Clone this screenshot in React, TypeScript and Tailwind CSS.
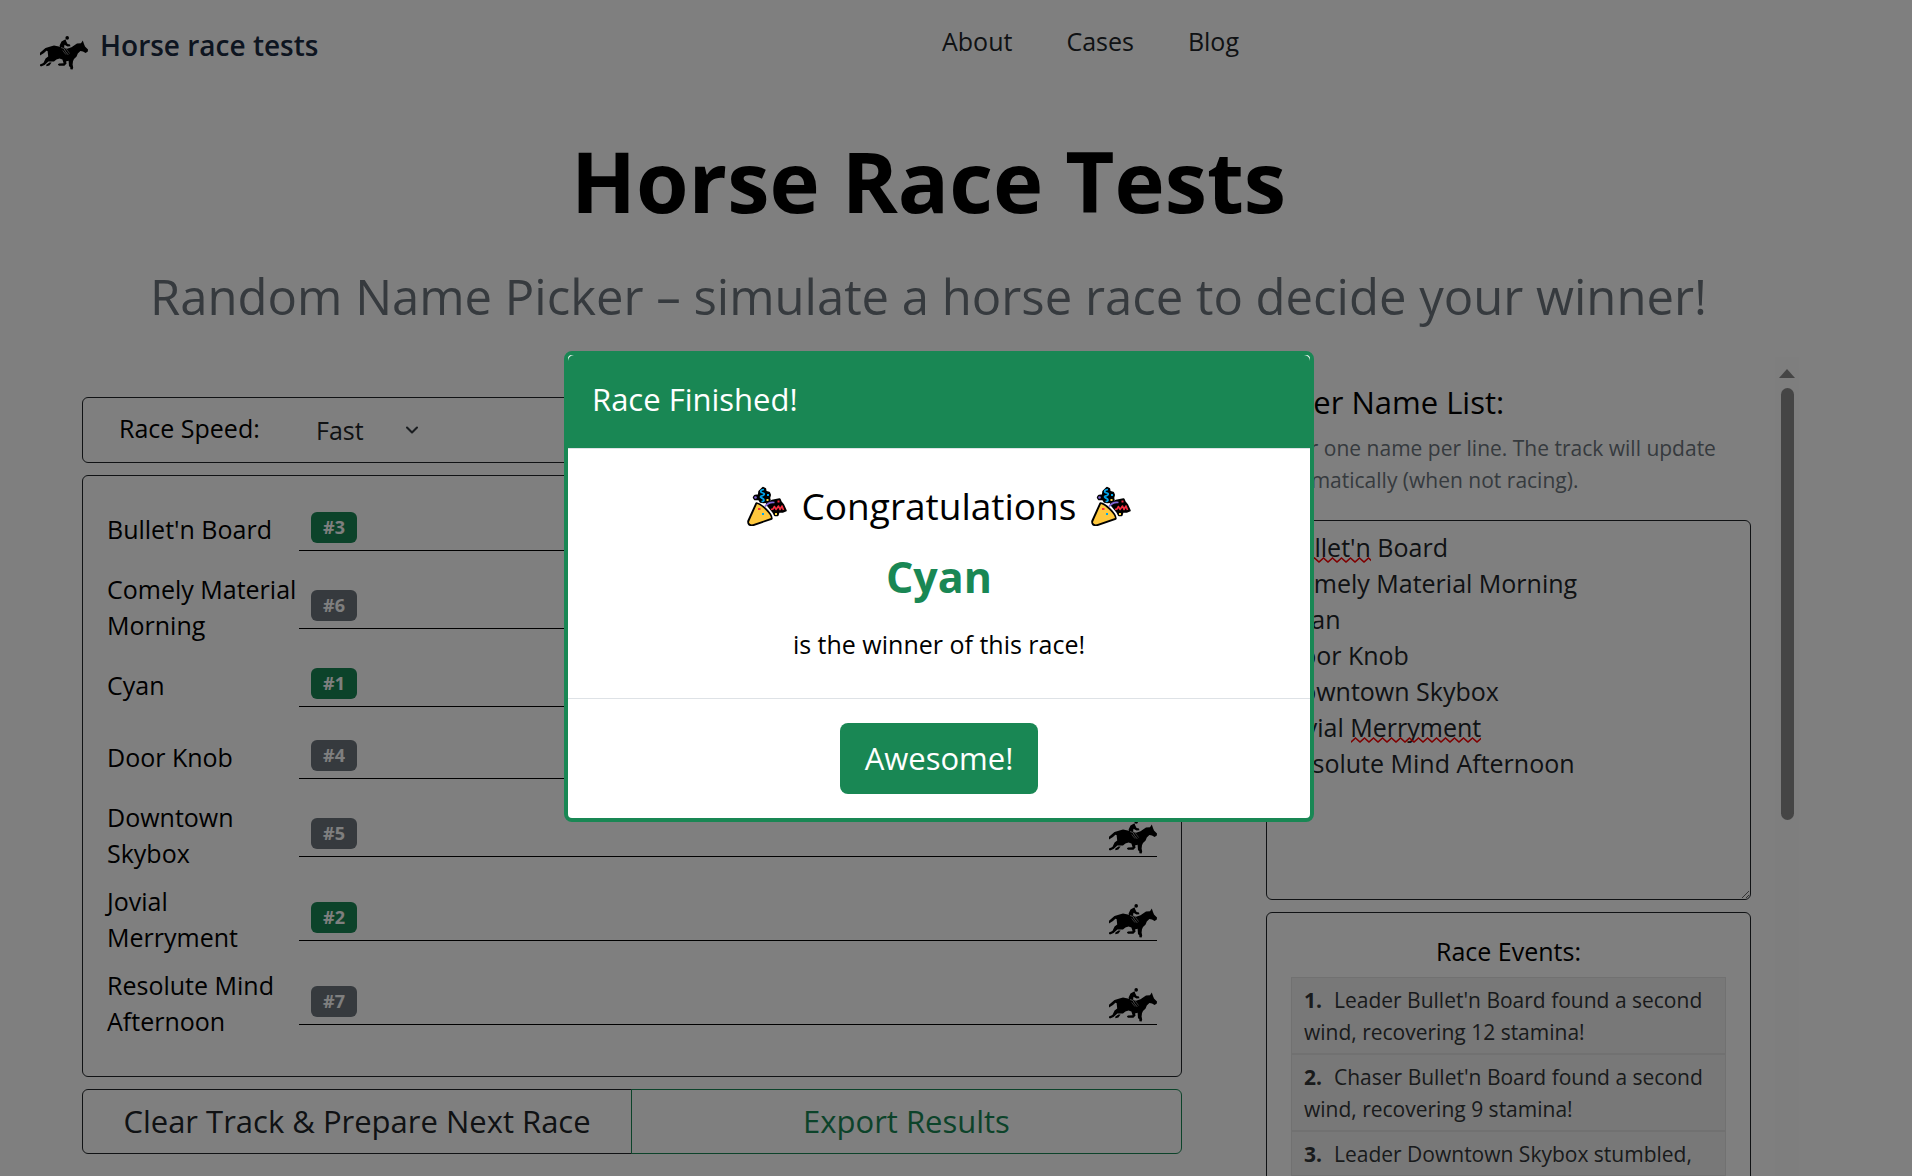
import { useState } from "react";
import { ChevronDown } from "lucide-react";
import clsx from "clsx";

const nav = ["About", "Cases", "Blog"];

const racers = [
  { name: "Bullet'n Board", place: 3 },
  { name: "Comely Material Morning", place: 6 },
  { name: "Cyan", place: 1 },
  { name: "Door Knob", place: 4 },
  { name: "Downtown Skybox", place: 5 },
  { name: "Jovial Merryment", place: 2 },
  { name: "Resolute Mind Afternoon", place: 7 },
];

const events = [
  "Leader Bullet'n Board found a second wind, recovering 12 stamina!",
  "Chaser Bullet'n Board found a second wind, recovering 9 stamina!",
  "Leader Downtown Skybox stumbled,",
];

function Horse() {
  return (
    <svg viewBox="0 0 48 34" className="h-[34px] w-12 shrink-0" aria-hidden="true">
      <circle cx="27.2" cy="1.9" r="1.8" />
      <path d="M25.5 3.2 L21.5 5.5 L19.6 9.5 L20.5 12.5 L24 12 L24.5 8.8 L27.5 10.6 L30.4 10.2 L30 8.6 L27.6 8 L26.4 5.8Z" />
      <path d="M0 19.5 L0 16.8 L5.5 12 L10.5 10.6 L14 9.6 L20 10.8 L27 12.8 L31.5 11.2 L37 7.6 L41 7.2 L42.8 4.4 L43.8 7.6 L45 10.5 L48 13.6 L47.8 15.4 L45.6 17 L43 15.6 L40.4 15 L37.8 17.4 L36.6 20.6 L34 23 L33 25.2 L32.6 28.4 L33.2 31.6 L32.6 33.6 L30.4 33.2 L30.2 31 L29 30.2 L28.6 24.8 L26 25.4 L26.6 27.6 L24.4 29.8 L19 29.8 L17.8 28.6 L19 27.6 L23.6 27.2 L22.4 23.6 L19.6 22.4 L16.4 23.6 L14 25.6 L10.8 25.4 L8.4 25.6 L4.6 29 L1 30.6 L0 29.8 L0 28.6 L3.4 27 L5.6 22.6 L8.2 20.4 L7.6 15 L6.4 14.8 L4 17Z" />
      <path d="M9.4 26.4 L11.6 26.6 L9.4 29.6 L6.4 30.2 L6.2 28.8Z" />
      <path d="M21 11.5 L24 12.5 L25.4 15.4 L28.2 18.8" fill="none" stroke="#b4b4b4" strokeWidth="0.8" />
      <path d="M24.2 11.2 L26.4 13.2 L29.6 17.6 M22.6 14.4 L26 18.6" fill="none" stroke="#9a9a9a" strokeWidth="0.7" />
    </svg>
  );
}

function PartyPopper() {
  return (
    <svg viewBox="0 0 40 40" className="size-10 shrink-0" role="img" aria-label="Party popper">
      <g fill="#000" stroke="#000" strokeWidth="2.4" strokeLinejoin="round">
        <path d="M9.5 17.5 C14 18 24 27 24.5 32.500 L6 39 Q0.800 39.500 1.500 35Z" />
        <path d="M16 2 L18 3 L18.500 6 L22 7 L22.800 9 L22 12 L22.500 14 L21 15.500 L16.500 16 L13.500 15.500 L12 13 L8 13 L7 11.500 L8 10 L12 9.500 L12.500 5.500Z" />
        <path d="M20 18 L25 15 L30 14 L32.500 13.500 L33.500 16 L36 19 L38.500 24.500 L36 25.500 L31.500 25.500 L30.500 29 L28 29 L26.500 26Z" />
      </g>
      <path d="M10 18 C14 19 23 27 24 32 L6 38.300 Q1.500 39 2.200 35.500Z" fill="#FFC83D" />
      <path d="M17 3.500 C12.500 4 13 6.500 16 7 C19 8 16 9.800 14 10.200 C12 12 17 12 17 14 Q17 15.500 14.500 15.500" fill="none" stroke="#00A6ED" strokeWidth="1.700" />
      <path d="M18 20.500 Q22 15.500 27.500 16.500" fill="none" stroke="#8467D7" strokeWidth="1.700" />
      <path d="M24 23.500 L26 23 L27.500 20.500 L29 23.500 L31.500 20 L33 23.500 L35 20 L36.500 24" fill="none" stroke="#F92F40" strokeWidth="1.600" strokeLinejoin="round" />
      <path d="M20 8h2v2h-2zM15 27h2v2h-2z" fill="#00A6ED" />
      <path d="M11 22h2.500v2h-2.500zM30.500 14.500h2v2h-2z" fill="#F92F40" />
      <path d="M19.500 13h2v2h-2zM28 27h2v2h-2z" fill="#FCD53F" />
      <circle cx="8.500" cy="11.500" r="1.300" fill="#8467D7" />
    </svg>
  );
}

/* red zigzag the spell checker puts under unknown words */
function Squiggle({ id, className }: { id: string; className: string }) {
  return (
    <svg className={clsx("pointer-events-none absolute h-[6px]", className)} aria-hidden="true">
      <pattern id={id} width="9" height="6" patternUnits="userSpaceOnUse">
        <path d="M-1 5.500 L0 5 L4.500 1 L9 5 L10 5.500" fill="none" stroke="#ff0000" strokeWidth="1.500" />
      </pattern>
      <rect width="100%" height="6" fill={`url(#${id})`} />
    </svg>
  );
}

function Header() {
  return (
    <header className="grid h-24 grid-cols-2 items-start pr-7">
      <a href="#" className="flex items-center gap-3 pt-6 pl-10 text-[28px] leading-[38px] font-semibold text-[#1b2a41]">
        <span className="pt-3">
          <Horse />
        </span>
        <span className="pb-1">Horse race tests</span>
      </a>
      <nav className="flex gap-[54px] pt-[22px] text-[25px] leading-[38px] text-[#212529]">
        {nav.map((item) => (
          <a key={item} href="#">
            {item}
          </a>
        ))}
      </nav>
    </header>
  );
}

function Track() {
  return (
    <div className="rounded-md border border-[#212529] px-6 pt-[17px] pb-[31px]">
      {racers.map((racer) => (
        <div key={racer.name} className="flex min-h-[72px] items-center py-[6px]">
          <div className="w-48 shrink-0 text-[25px] leading-9">{racer.name}</div>
          <div className="flex h-[43px] flex-1 items-start justify-between border-b border-black pl-3">
            <span
              className={clsx(
                "mt-1 flex h-[31px] w-[46px] items-center justify-center rounded-md text-[18px] font-bold text-white",
                racer.place <= 3 ? "bg-[#198754]" : "bg-[#6c757d]"
              )}
            >
              #{racer.place}
            </span>
            <span className="pt-[6px]">
              <Horse />
            </span>
          </div>
        </div>
      ))}
    </div>
  );
}

function NamePanel() {
  const [names, setNames] = useState(racers.map((r) => r.name).join("\n"));

  return (
    <div>
      <label htmlFor="names" className="block pt-[22px] text-[31px] leading-[46px]">
        Enter Name List:
      </label>
      <p className="pt-[7px] text-[21px] leading-8 text-[#6c757d]">
        Enter one name per line. The track will update automatically (when not racing).
      </p>
      <div className="relative mt-6">
        <textarea
          id="names"
          spellCheck={false}
          value={names}
          onChange={(e) => setNames(e.target.value)}
          className="block h-[380px] w-full resize-y rounded-md border border-[#212529] px-4 py-2 text-[25px] leading-9 text-[#212529]"
        />
        <Squiggle id="wave-bullet" className="top-[37px] left-[17px] w-[88px]" />
        <Squiggle id="wave-merryment" className="top-[217px] left-[85px] w-[130px]" />
      </div>
      <div className="mt-3 rounded-md border border-[#212529] px-6 pt-5 pb-6">
        <h3 className="pb-2 text-center text-[25px] leading-9">Race Events:</h3>
        <ol className="border border-[#e2e2e2] bg-[#f1f1f1]">
          {events.map((text, i) => (
            <li key={text} className="border-b-2 border-[#e2e2e2] px-3 pt-[6px] pb-[5px] text-[21px] leading-8 text-[#333638]">
              <strong className="mr-3">{i + 1}.</strong>
              {text}
            </li>
          ))}
        </ol>
      </div>
    </div>
  );
}

function WinnerDialog({ onClose }: { onClose: () => void }) {
  return (
    <div className="fixed inset-0 flex items-center justify-center bg-black/50 pr-[34px]">
      <div
        role="dialog"
        aria-modal="true"
        aria-labelledby="winner-title"
        className="mb-1 w-full max-w-[750px] rounded-lg border-4 border-[#198754] bg-white"
      >
        <div className="rounded-t-md border-b border-[#dee2e6] bg-[#198754] px-6 pt-[22px] pb-[26px]">
          <h2 id="winner-title" className="text-[31px] leading-[45px] font-medium text-white">
            Race Finished!
          </h2>
        </div>
        <div className="px-6 pt-[30px] pb-[34px] text-center">
          <p className="flex items-center justify-center gap-[15px] text-[37px] leading-[54px]">
            <PartyPopper />
            Congratulations
            <PartyPopper />
          </p>
          <p className="pt-3 text-[43px] leading-[64px] font-bold text-[#198754]">Cyan</p>
          <p className="pt-[15px] text-[25px] leading-10">is the winner of this race!</p>
        </div>
        <div className="flex justify-center border-t border-[#dee2e6] px-6 py-6">
          <button
            type="button"
            onClick={onClose}
            className="rounded-lg bg-[#198754] px-[25px] py-3 text-[31px] leading-[47px] text-white"
          >
            Awesome!
          </button>
        </div>
      </div>
    </div>
  );
}

export default function App() {
  const [open, setOpen] = useState(true);

  return (
    <div className="h-screen overflow-hidden bg-white font-['Open_Sans',sans-serif] text-black">
      <Header />
      <main className="mr-[113px] ml-[58px]">
        <h1 className="pt-6 text-center text-[85px] leading-[120px] font-bold">Horse Race Tests</h1>
        <p className="pt-5 text-center text-[49px] leading-[72px] whitespace-nowrap text-[#6c757d]">
          Random Name Picker – simulate a horse race to decide your winner!
        </p>
        <div className="mt-[25px] flex">
          <div className="grid flex-1 grid-cols-[minmax(0,1100fr)_minmax(0,485fr)] items-start gap-[84px] px-6">
            <div className="flex flex-col gap-3 pt-10">
              <div className="flex h-[66px] items-center rounded-md border border-[#212529] pl-9">
                <label htmlFor="speed" className="w-[197px] pb-1 text-[25px] leading-9">
                  Race Speed:
                </label>
                <div className="relative">
                  <select
                    id="speed"
                    defaultValue="Fast"
                    className="w-[118px] appearance-none bg-transparent text-[25px] leading-9 text-[#212529]"
                  >
                    <option>Slow</option>
                    <option>Normal</option>
                    <option>Fast</option>
                  </select>
                  <ChevronDown className="pointer-events-none absolute top-2 right-3 size-5 text-[#343a40]" strokeWidth={2.5} />
                </div>
              </div>
              <Track />
              <div className="grid grid-cols-2 text-[31px] leading-[47px]">
                <button type="button" className="rounded-l-md border border-[#212529] py-2 text-[#212529]">
                  Clear Track &amp; Prepare Next Race
                </button>
                <button type="button" className="-ml-px rounded-r-md border border-[#198754] py-2 text-[#198754]">
                  Export Results
                </button>
              </div>
            </div>
            <NamePanel />
          </div>
          <div className="flex w-6 flex-col items-center gap-[10px] self-stretch bg-[#fcfcfc] pt-3">
            <svg viewBox="0 0 16 9" className="h-[9px] w-4" fill="#8b8b8b" aria-hidden="true">
              <path d="M8 0 L16 9 H0Z" />
            </svg>
            <div className="h-[432px] w-[13px] rounded-full bg-[#8b8b8b]" />
          </div>
        </div>
      </main>
      {open && <WinnerDialog onClose={() => setOpen(false)} />}
    </div>
  );
}
